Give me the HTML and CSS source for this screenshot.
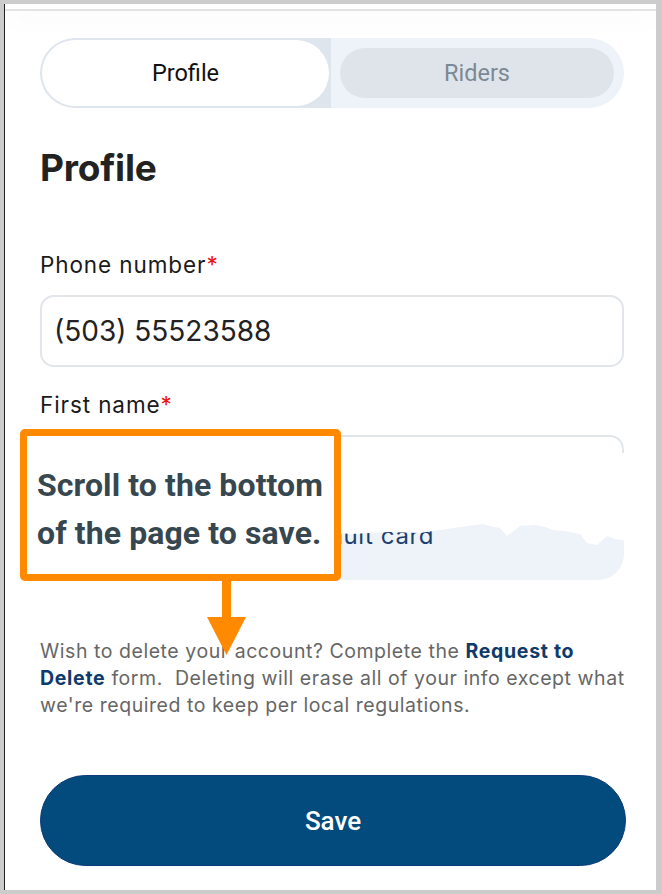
FILE: index.html
```html
<!DOCTYPE html>
<html lang="en">
<head>
<meta charset="utf-8">
<title>Profile</title>
<link rel="stylesheet" href="styles.css">
</head>
<body>
<div class="frame">
  <div class="topbar"></div>
  <div class="gap"></div>
  <main class="content">
    <div class="tabs">
      <div class="tab-side tab-side-active"><div class="tab tab-active">Profile</div></div>
      <div class="tab-side tab-side-idle"><div class="tab tab-idle">Riders</div></div>
    </div>
    <h1 class="title">Profile</h1>
    <label class="label label-phone">Phone number<span class="req">*</span></label>
    <div class="input">(503) 55523588</div>
    <label class="label label-first">First name<span class="req">*</span></label>
    <div class="field2">
      <div class="card-label">Default card</div>
      <div class="mask"><div class="edge"></div></div>
    </div>
    <p class="note">Wish to delete your account? Complete the <a class="link">Request to Delete</a> form.&nbsp; Deleting will erase all of your info except what we're required to keep per local regulations.</p>
    <button class="save">Save</button>
  </main>
  <div class="callout">
    <div class="callout-text">Scroll to the bottom<br>of the page to save.</div>
  </div>
  <svg class="arrow" width="40" height="76" viewBox="0 0 40 76">
    <rect x="15" y="0" width="9" height="38" fill="#ff8a00"/>
    <polygon points="0,36 39,36 19.5,74" fill="#ff8a00"/>
  </svg>
</div>
</body>
</html>
```

FILE: styles.css
```css
html, body {
  margin: 0;
  padding: 0;
}
body {
  background: #cccccc;
  width: 662px;
  height: 894px;
  overflow: hidden;
  padding-top: 4px;
  box-sizing: border-box;
}
.frame {
  position: relative;
  margin: 0 6px 0 4px;
  height: 886px;
  border-left: 1px solid #222;
  background: #fff;
  overflow: hidden;
}
.gap {
  position: absolute;
  left: -1px;
  top: 451px;
  width: 1px;
  height: 80px;
  background: #cccccc;
}
.topbar {
  height: 5px;
  border-bottom: 2px solid #e4e4e4;
  box-shadow: 0 10px 22px rgba(0, 0, 0, 0.035);
}
.content {
  padding: 0 32px 0 35px;
  font-family: Inter, "DejaVu Sans", sans-serif;
}
.tabs {
  margin-top: 27px;
  height: 70px;
  display: grid;
  grid-template-columns: 291px 1fr;
  border-radius: 35px;
  overflow: hidden;
}
.tab-side {
  display: flex;
}
.tab-side-active {
  background: #dfe5ec;
  padding: 2px;
}
.tab-side-idle {
  background: #eef3f9;
  padding: 10px 10px 10px 9px;
}
.tab {
  flex: 1;
  display: flex;
  align-items: center;
  justify-content: center;
  font-family: Roboto, "Liberation Sans", sans-serif;
  font-size: 23.5px;
}
.tab-active {
  background: #fff;
  border-radius: 33px;
  color: #111;
}
.tab-idle {
  background: #dfe4eb;
  border-radius: 25px;
  color: #7b8995;
}
.title {
  margin: 38px 0 0;
  font-size: 37px;
  line-height: 44px;
  font-weight: 700;
  color: #222;
  letter-spacing: -0.2px;
}
.label {
  display: block;
  font-size: 22.5px;
  line-height: 28px;
  letter-spacing: 0.9px;
  color: #1a1a1a;
}
.label-phone {
  margin-top: 61px;
}
.label-first {
  margin-top: 24px;
}
.req {
  color: #ee1111;
  letter-spacing: 0;
}
.input {
  margin-top: 16px;
  height: 72px;
  box-sizing: border-box;
  border: 2px solid #e2e6ea;
  border-radius: 14px;
  padding-left: 12px;
  display: flex;
  align-items: center;
  font-size: 28px;
  color: #222;
}
.field2 {
  position: relative;
  margin-top: 16px;
  height: 145px;
  background: #eef3f9;
  border-radius: 14px 14px 26px 26px;
  overflow: hidden;
}
.card-label {
  width: 394px;
  padding-top: 86px;
  text-align: right;
  font-size: 24px;
  line-height: 30px;
  letter-spacing: 0.6px;
  color: #1c3f70;
}
.mask {
  position: absolute;
  inset: 0;
  background: #fff;
  clip-path: polygon(0 0, 584px 0, 584px 105px, 575px 104px, 567px 101px, 557px 110px, 547px 108px, 540px 99px, 525px 96px, 513px 95px, 505px 92px, 495px 90px, 480px 91px, 467px 101px, 460px 93px, 450px 91px, 443px 89px, 420px 92px, 400px 95px, 380px 98px, 350px 97px, 330px 98px, 310px 99px, 300px 98px, 0 98px);
}
.edge {
  height: 16px;
  border-top: 2px solid #e2e6ea;
  border-right: 2px solid #e2e6ea;
  border-top-right-radius: 14px;
}
.note {
  margin: 58px -6px 0 0;
  font-size: 19.5px;
  line-height: 27px;
  letter-spacing: 0.55px;
  color: #666;
}
.link {
  color: #0e3a6c;
  font-weight: 700;
  letter-spacing: 0.7px;
}
.save {
  display: block;
  margin: 56px -2px 0 0;
  width: calc(100% + 2px);
  height: 91px;
  border: 1px solid #0b3a78;
  border-radius: 46px;
  background: #034b7d;
  color: #fff;
  font-family: Roboto, "Liberation Sans", sans-serif;
  font-size: 26px;
  font-weight: 500;
}
.callout {
  position: absolute;
  left: 15px;
  top: 425px;
  width: 321px;
  height: 152px;
  box-sizing: border-box;
  border: 7px solid #ff8a00;
  border-radius: 5px;
  background: #fff;
  padding: 25px 0 0 10px;
}
.callout-text {
  font-family: Roboto, "Liberation Sans", sans-serif;
  font-weight: 700;
  font-size: 32px;
  line-height: 48px;
  letter-spacing: 0.1px;
  color: #37474f;
  white-space: nowrap;
}
.arrow {
  position: absolute;
  left: 202px;
  top: 577px;
}
```
